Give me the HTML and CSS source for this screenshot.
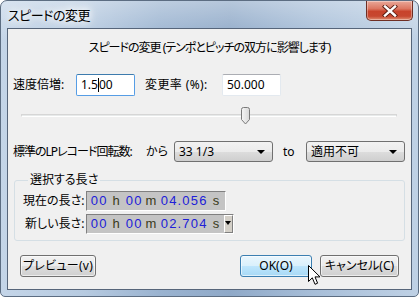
FILE: index.html
```html
<!DOCTYPE html>
<html lang="ja">

<head>
    <meta charset="UTF-8">
    <title>スピードの変更</title>
    <link rel="stylesheet" href="styles.css">
</head>

<body>
    <div class="window">
        <!-- Title bar -->
        <div class="titlebar">
            <span class="title">スピードの変更</span>
            <div class="close">
                <svg width="16" height="12" viewBox="0 0 16 12">
                    <path d="M3 1.5 L13 10.5 M13 1.5 L3 10.5" stroke="#5a1d12" stroke-width="4.2" stroke-linecap="square" />
                    <path d="M3 1.5 L13 10.5 M13 1.5 L3 10.5" stroke="#ffffff" stroke-width="2.4" stroke-linecap="square" />
                </svg>
            </div>
        </div>

        <div class="client">
            <p class="heading">スピードの変更 (テンポとピッチの双方に影響します)</p>

            <!-- Speed multiplier / percent change -->
            <div class="row rate">
                <span class="label speed-label">速度倍増:</span>
                <div class="field focused">1.5<span class="caret"></span>00</div>
                <span class="label percent-label">変更率 (%):</span>
                <div class="field">50.000</div>
            </div>

            <!-- Slider -->
            <div class="slider">
                <div class="track"></div>
                <svg class="thumb" width="11" height="18" viewBox="0 0 11 18">
                    <path d="M1.5 2.5 Q1.5 0.5 3.5 0.5 L7.5 0.5 Q9.5 0.5 9.5 2.5 L9.5 12.5 L5.5 17 L1.5 12.5 Z" fill="url(#thumbFill)" stroke="#7a7a7a" />
                    <defs>
                        <linearGradient id="thumbFill" x1="0" y1="0" x2="1" y2="0">
                            <stop offset="0" stop-color="#f6f6f6" />
                            <stop offset="1" stop-color="#d8d8d8" />
                        </linearGradient>
                    </defs>
                </svg>
            </div>

            <!-- Vinyl RPM -->
            <div class="row vinyl">
                <span class="label vinyl-label">標準のLPレコード回転数:</span>
                <span class="label from-label">から</span>
                <div class="combo">33 1/3<span class="arrow"></span></div>
                <span class="label to-label">to</span>
                <div class="combo">適用不可<span class="arrow"></span></div>
            </div>

            <!-- Selection length -->
            <fieldset class="lengths">
                <legend>選択する長さ</legend>
                <div class="time-row">
                    <span class="label time-label">現在の長さ:</span>
                    <div class="time">
                        <span class="d">0</span><span class="d">0</span><span class="u">h</span><span class="d">0</span><span class="d">0</span><span class="u">m</span><span class="d">0</span><span class="d">4</span><span class="dot">.</span><span class="d">0</span><span class="d">5</span><span class="d">6</span><span class="u">s</span>
                    </div>
                </div>
                <div class="time-row">
                    <span class="label time-label new">新しい長さ:</span>
                    <div class="time">
                        <span class="d">0</span><span class="d">0</span><span class="u">h</span><span class="d">0</span><span class="d">0</span><span class="u">m</span><span class="d">0</span><span class="d">2</span><span class="dot">.</span><span class="d">7</span><span class="d">0</span><span class="d">4</span><span class="u">s</span>
                        <span class="time-drop"></span>
                    </div>
                </div>
            </fieldset>

            <!-- Buttons -->
            <div class="buttons">
                <button class="btn preview">プレビュー(v)</button>
                <span class="spacer"></span>
                <button class="btn ok hover">OK(O)</button>
                <button class="btn cancel">キャンセル(C)</button>
            </div>
        </div>

        <!-- Mouse pointer over OK -->
        <svg class="cursor" width="13" height="21" viewBox="0 0 13 21">
            <path d="M0.5 0.5 L0.5 16.5 L4.3 12.8 L7 19.3 L9.6 18.2 L7 11.9 L12 11.9 Z" fill="#ffffff" stroke="#000000" stroke-linejoin="round" />
        </svg>
    </div>
</body>

</html>
```

FILE: styles.css
```css
* {
    box-sizing: border-box;
}

body {
    margin: 0;
    font-family: "Noto Sans", "Noto Sans CJK JP", sans-serif;
    font-size: 12px;
    color: #000000;
    font-feature-settings: "palt";
}

/* Aero window frame */
.window {
    position: relative;
    width: 419px;
    height: 297px;
    padding: 0 6px 6px 6px;
    border: 1px solid #5c6d82;
    border-radius: 7px 7px 5px 5px;
    background:
        linear-gradient(180deg, rgba(255, 255, 255, 0.35) 0, rgba(255, 255, 255, 0) 40px),
        linear-gradient(90deg, #c4d5e8 0%, #b6cae0 20%, #9ab3d0 38%, #8fa9c8 55%, #a7bed8 75%, #bfd1e5 100%);
    display: flex;
    flex-direction: column;
}

.titlebar {
    height: 27px;
    display: flex;
    align-items: flex-start;
    justify-content: space-between;
}

.title {
    margin: 7px 0 0 1px;
    line-height: 14px;
    font-size: 13px;
    letter-spacing: -0.5px;
    text-shadow: 0 0 6px #ffffff, 0 0 10px #ffffff, 0 0 14px rgba(255, 255, 255, 0.8);
}

.close {
    width: 47px;
    height: 20px;
    margin-right: -1px;
    border: 1px solid #6e2e24;
    border-top: none;
    border-radius: 0 0 5px 5px;
    background: linear-gradient(180deg, #e9a899 0%, #dc7762 40%, #c8432b 55%, #c7472f 80%, #e08f72 100%);
    box-shadow: inset 0 0 0 1px rgba(255, 255, 255, 0.35);
    display: flex;
    align-items: center;
    justify-content: center;
}

/* Dialog client area */
.client {
    flex: 1;
    background: #f0f0f0;
    border: 1px solid #56657a;
    padding: 12px 0 0 5px;
    display: flex;
    flex-direction: column;
}

.heading {
    margin: 0;
    line-height: 14px;
    text-align: center;
    padding-right: 5px;
    letter-spacing: -1px;
}

.row {
    display: flex;
    align-items: center;
}

.label {
    flex: none;
    line-height: 14px;
    white-space: nowrap;
}

.rate {
    margin-top: 19px;
    height: 22px;
}

.speed-label {
    width: 63px;
}

.percent-label {
    width: 77px;
    margin-left: 10px;
    letter-spacing: 0.4px;
}

.field {
    width: 59px;
    height: 22px;
    background: #ffffff;
    border: 1px solid #e3e9ef;
    border-top-color: #abadb3;
    padding: 3px 0 0 4px;
    line-height: 14px;
    border-radius: 2px;
}

.field.focused {
    border-color: #569de5;
    border-top-color: #3d7bad;
}

.caret {
    display: inline-block;
    width: 1px;
    height: 14px;
    background: #000000;
    vertical-align: top;
}

/* Slider */
.slider {
    position: relative;
    margin: 8px 0 0 8px;
    width: 376px;
    height: 22px;
}

.track {
    position: absolute;
    left: 0;
    right: 0;
    top: 10px;
    height: 3px;
    background: #e7eaea;
    border: 1px solid #d6d6d6;
    border-bottom-color: #ffffff;
}

.thumb {
    position: absolute;
    left: 219px;
    top: 3px;
}

/* Vinyl row */
.vinyl {
    margin-top: 15px;
    height: 21px;
}

.vinyl-label {
    width: 133px;
    letter-spacing: -1px;
}

.from-label {
    width: 28px;
}

.to-label {
    width: 23px;
    margin-left: 10px;
}

.combo {
    position: relative;
    width: 99px;
    height: 21px;
    border: 1px solid #707070;
    border-radius: 3px;
    background: linear-gradient(180deg, #f2f2f2 0%, #ebebeb 50%, #dddddd 51%, #cfcfcf 100%);
    padding: 2px 0 0 4px;
    line-height: 15px;
}

.arrow {
    position: absolute;
    right: 7px;
    top: 8px;
    border-left: 4px solid transparent;
    border-right: 4px solid transparent;
    border-top: 4px solid #000000;
}

/* Selection length group */
.lengths {
    margin: 11px 0 0 1px;
    width: 391px;
    padding: 4px 8px 6px 8px;
    border: 1px solid #d5dfe5;
    border-radius: 3px;
}

.lengths legend {
    padding: 0 2px;
    margin-left: 5px;
    line-height: 14px;
}

.time-row {
    display: flex;
    align-items: center;
    height: 20px;
}

.time-row + .time-row {
    margin-top: 3px;
}

.time-label {
    width: 63px;
}

.time-label.new {
    padding-left: 2px;
}

.time {
    display: flex;
    align-items: center;
    height: 20px;
    padding-left: 3px;
    background: #c4c4c4;
    border: 1px solid #ffffff;
    border-top-color: #808080;
    border-left-color: #808080;
    font-family: "Liberation Sans", sans-serif;
    font-size: 13px;
    line-height: 16px;
}

.time .d {
    width: 8.5px;
    text-align: center;
    color: #2020d8;
}

.time .dot {
    width: 4.5px;
    text-align: center;
    color: #2020d8;
}

.time .u {
    width: 12px;
    margin: 0 3px;
    text-align: center;
    color: #3a3a1a;
}

.time-drop {
    position: relative;
    width: 9px;
    height: 18px;
    margin-left: -1px;
    background: #d4d0c8;
    border: 1px solid #ffffff;
    border-right-color: #808080;
    border-bottom-color: #808080;
}

.time-drop::after {
    content: "";
    position: absolute;
    left: 0;
    top: 5px;
    border-left: 3.5px solid transparent;
    border-right: 3.5px solid transparent;
    border-top: 4px solid #000000;
}

/* Buttons */
.buttons {
    display: flex;
    margin: 14px 0 0 7px;
    padding-right: 12px;
}

.spacer {
    flex: 1;
}

.btn {
    height: 22px;
    padding: 0;
    border: 1px solid #707070;
    border-radius: 3px;
    background: linear-gradient(180deg, #f2f2f2 0%, #ebebeb 50%, #dddddd 51%, #cfcfcf 100%);
    box-shadow: inset 0 0 0 1px rgba(255, 255, 255, 0.6);
    font-family: "Noto Sans", "Noto Sans CJK JP", sans-serif;
    font-size: 12px;
    font-feature-settings: "palt";
    line-height: 14px;
    color: #000000;
}

.preview {
    width: 76px;
    letter-spacing: 0.3px;
}

.ok {
    width: 72px;
}

.ok.hover {
    border-color: #3c7fb1;
    background: linear-gradient(180deg, #eaf6fd 0%, #d9f0fc 50%, #bee6fd 51%, #a7d9f5 100%);
}

.cancel {
    width: 79px;
    margin-left: 8px;
}

.cursor {
    position: absolute;
    left: 307px;
    top: 264px;
}
```
